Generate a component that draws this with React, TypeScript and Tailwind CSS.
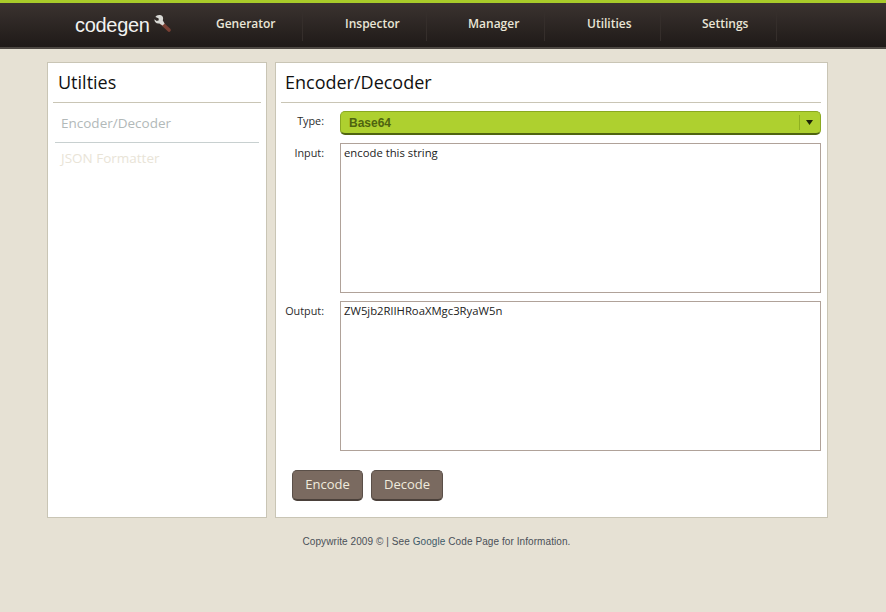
import React from "react";

const font = "font-['Open_Sans','DejaVu_Sans',sans-serif]";

function Wrench() {
  return (
    <svg width="20" height="20" viewBox="0 0 20 20" className="ml-[3px] mt-[-4px]">
      <path d="M8.5 10 L16 17" stroke="#7a4034" strokeWidth="3.6" strokeLinecap="round" />
      <path d="M8 2.2 C5.5 1.5 3.2 2.2 2.4 4 L5.5 5.2 L5.8 7.2 L3.8 8 L1.4 6.2 C1.2 9 3.6 11 6.4 10.4 L9.6 12.6 L11.6 10.4 L9.8 7.4 C10.6 5.2 10 3 8 2.2 Z" fill="#d8d8d4" />
    </svg>
  );
}

const navItems = [
  { label: "Generator", cls: "w-[116px] pl-[29px]" },
  { label: "Inspector", cls: "w-[124px] pl-[42px]" },
  { label: "Manager", cls: "w-[118px] pl-[41px]" },
  { label: "Utilities", cls: "w-[116px] pl-[42px]" },
  { label: "Settings", cls: "w-[116px] pl-[41px]" },
];

function Row({ label, children, className }: { label: string; children: React.ReactNode; className?: string }) {
  return (
    <div className={`flex ${className ?? ""}`}>
      <div className="w-[43px] shrink-0 pt-[2px] text-right text-[10.8px] text-[#2b2b2b]">{label}</div>
      <div className="ml-[16px] flex-1">{children}</div>
    </div>
  );
}

function Area({ value }: { value: string }) {
  return (
    <textarea
      readOnly
      value={value}
      className="block h-[150px] w-full resize-none border border-[#b0a299] bg-white px-[3px] py-[1px] text-[11.3px] leading-[16px] text-[#222] outline-none"
    />
  );
}

function Btn({ children, w }: { children: React.ReactNode; w: string }) {
  return (
    <button className={`${w} h-[31px] rounded-[5px] border border-[#5a4f48] border-b-2 border-b-[#4a403a] bg-[#7a6a60] text-[13px] text-[#f0ebdd]`}>
      {children}
    </button>
  );
}

export default function App() {
  return (
    <div className={`${font} min-h-[612px] bg-[#e6e1d4]`}>
      <header className="h-[49px] border-t-[3px] border-b-[2px] border-t-[#a9cb2a] border-b-[#4d4843] bg-gradient-to-b from-[#3b3330] to-[#1f1a18]">
        <div className="flex h-full pl-[75px]">
          <div className="flex w-[112px] items-center">
            <span className="font-['Liberation_Sans',sans-serif] text-[20px] tracking-[-0.3px] text-[#f2f2f0]">codegen</span>
            <Wrench />
          </div>
          {navItems.map((n) => (
            <div
              key={n.label}
              className={`my-[6px] flex items-center border-r border-[#352e2b] pb-[2px] text-[12px] font-semibold text-[#e9e5d6] ${n.cls}`}
            >
              {n.label}
            </div>
          ))}
        </div>
      </header>

      <main className="ml-[47px] mt-[13px] flex h-[456px] w-[781px] gap-[8px]">
        <aside className="w-[220px] border border-[#c9c5b5] bg-white px-[5px]">
          <h2 className="h-[40px] border-b border-[#c9c5b5] pl-[5px] pt-[6px] text-[18px] font-medium leading-[26px] text-[#111]">Utilties</h2>
          <div className="mx-[2px] mt-[8px] h-[32px] border-b border-[#c8d0d0] pl-[6px] text-[13.5px] leading-[25px] text-[#b2b9b9]">Encoder/Decoder</div>
          <div className="mx-[2px] pl-[6px] pt-[3px] text-[13.5px] leading-[25px] text-[#e9e4d7]">JSON Formatter</div>
        </aside>

        <section className="w-[553px] border border-[#c9c5b5] bg-white pl-[5px] pr-[6px]">
          <h2 className="h-[40px] border-b border-[#c9c5b5] pl-[4px] pt-[6px] text-[18px] font-medium leading-[26px] text-[#111]">Encoder/Decoder</h2>
          <Row label="Type:" className="mt-[8px]">
            <div className="flex h-[24px] items-center rounded-[5px] border border-[#8aa820] border-b-2 border-b-[#4f6410] bg-[#aed02f] pl-[8px] font-['Liberation_Sans',sans-serif] text-[12px] font-bold text-[#4f6410]">
              <span className="flex-1">Base64</span>
              <span className="flex h-[15px] w-[21px] items-center justify-center border-l border-[#8fb020] pr-[2px]">
                <svg width="7" height="5" viewBox="0 0 7 5"><path d="M0 0h7L3.5 5z" fill="#1d2408" /></svg>
              </span>
            </div>
          </Row>
          <Row label="Input:" className="mt-[8px]">
            <Area value="encode this string" />
          </Row>
          <Row label="Output:" className="mt-[8px]">
            <Area value="ZW5jb2RlIHRoaXMgc3RyaW5n" />
          </Row>
          <div className="ml-[11px] mt-[19px] flex gap-[8px]">
            <Btn w="w-[71px]">Encode</Btn>
            <Btn w="w-[72px]">Decode</Btn>
          </div>
        </section>
      </main>

      <footer className="ml-[47px] mt-[17px] w-[779px] text-center font-['Liberation_Sans',sans-serif] text-[10px] leading-[13px] tracking-[0.08px] text-[#4a5058]">
        Copywrite 2009 © | See <span className="text-[#3d5a68]">Google</span> Code Page for Information.
      </footer>
    </div>
  );
}
